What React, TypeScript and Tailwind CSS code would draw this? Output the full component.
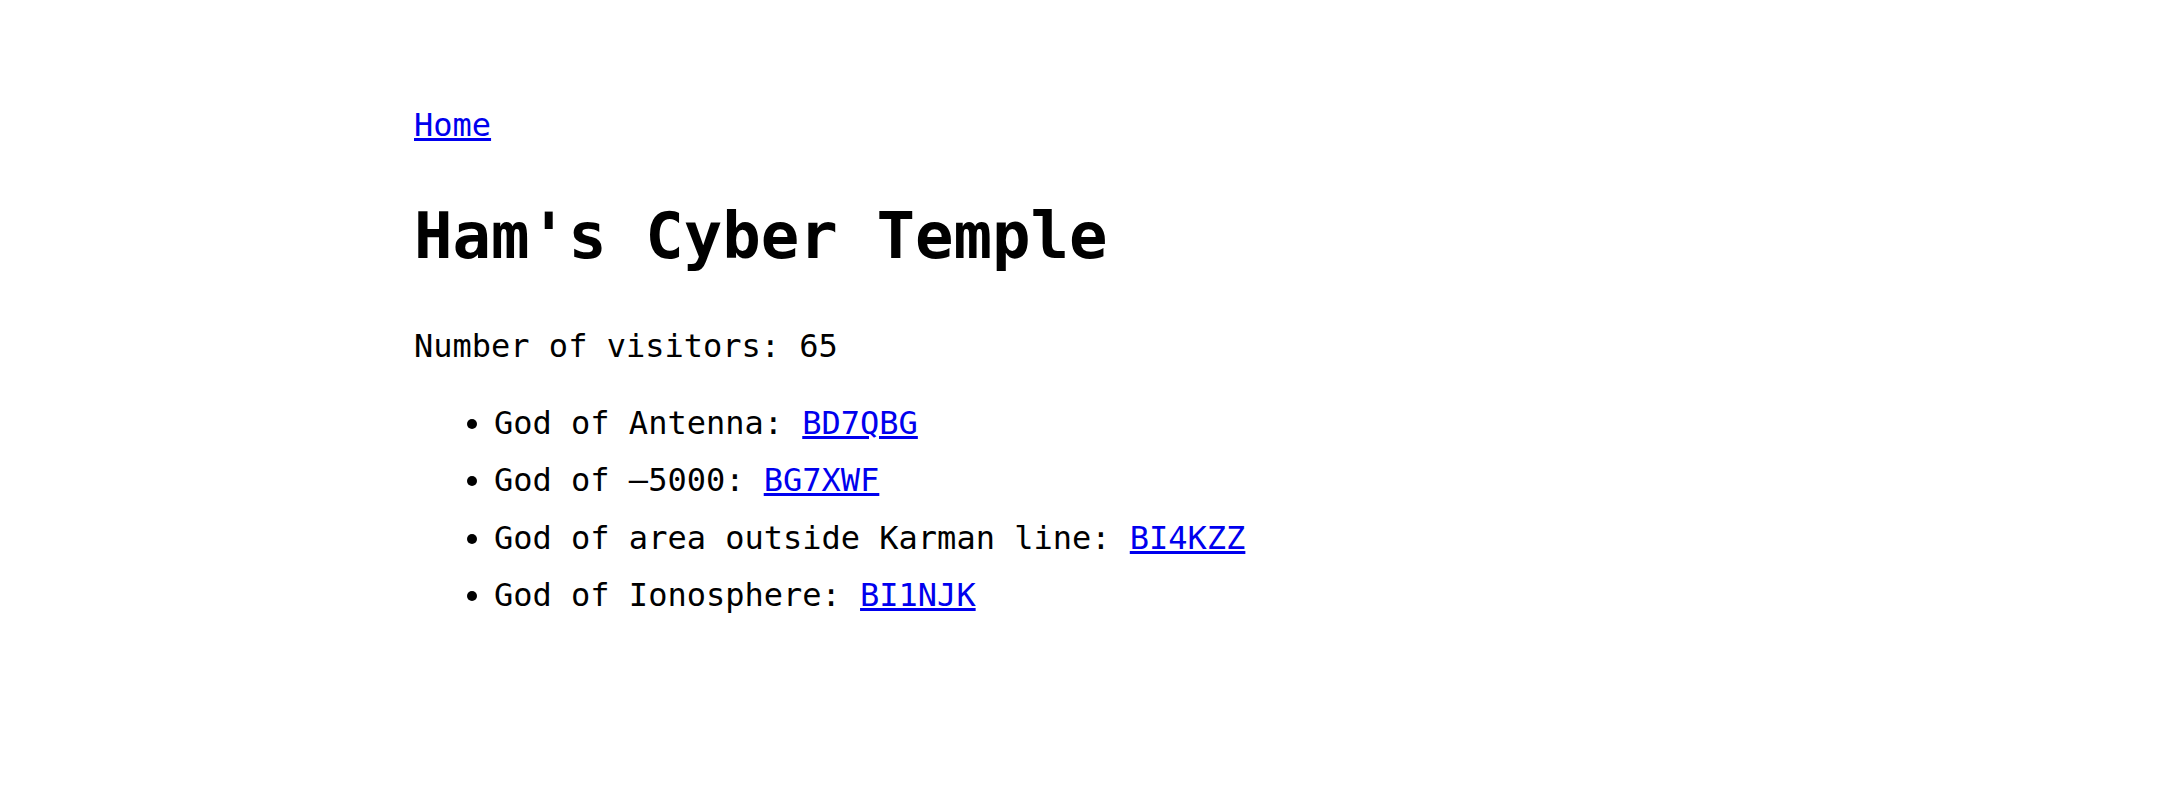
import React from "react";

export default function App() {
  const items: [string, string][] = [
    ["God of Antenna: ", "BD7QBG"],
    ["God of –5000: ", "BG7XWF"],
    ["God of area outside Karman line: ", "BI4KZZ"],
    ["God of Ionosphere: ", "BI1NJK"],
  ];
  return (
    <div
      className="w-[2160px] h-[802px] bg-white text-black pl-[414px] pt-[106px]"
      style={{ fontFamily: '"DejaVu Sans Mono", monospace' }}
    >
      <div className="text-[32px] leading-[38px]">
        <a href="#" className="text-[#0000ee] underline">
          Home
        </a>
      </div>
      <h1 className="mt-[54px] text-[64px] leading-[76px] font-bold">
        Ham's Cyber Temple
      </h1>
      <p className="mt-[53px] text-[32px] leading-[38px]">Number of visitors: 65</p>
      <ul className="mt-[30px] list-disc pl-[80px] text-[32px] leading-[57.4px]">
        {items.map(([label, call]) => (
          <li key={call}>
            {label}
            <a href="#" className="text-[#0000ee] underline">
              {call}
            </a>
          </li>
        ))}
      </ul>
    </div>
  );
}
